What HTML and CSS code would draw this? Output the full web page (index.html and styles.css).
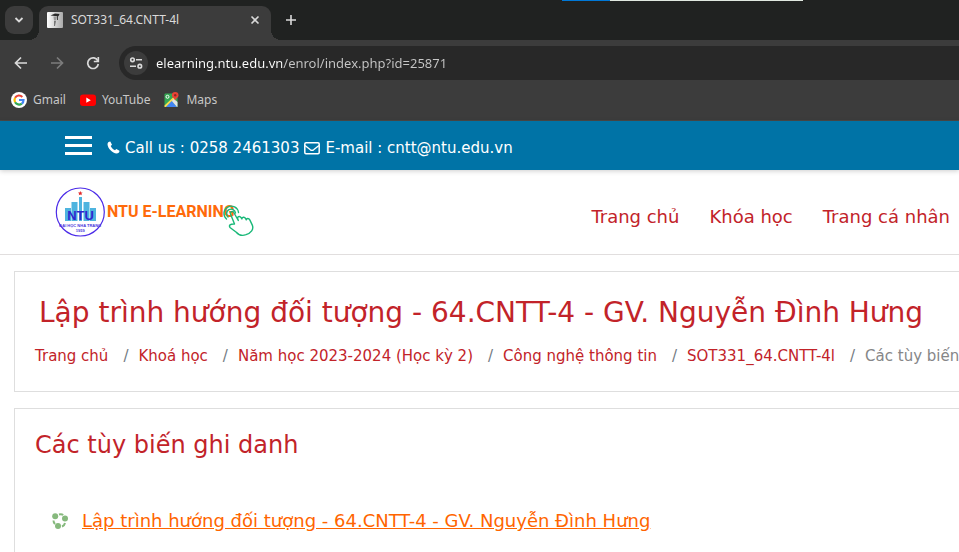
FILE: index.html
```html
<!DOCTYPE html>
<html lang="vi">
<head>
<meta charset="utf-8">
<meta name="viewport" content="width=device-width, initial-scale=1">
<title>SOT331_64.CNTT-4l</title>
<link rel="stylesheet" href="styles.css">
</head>
<body>
<div class="browser">
  <div class="accent"></div>
  <div class="tab-strip">
    <button class="tab-search" aria-label="Search tabs">
      <svg width="10" height="8" viewBox="0 0 10 8"><path d="M1.5 2 5 5.5 8.500 2" fill="none" stroke="currentColor" stroke-width="1.8"/></svg>
    </button>
    <div class="tab">
      <svg class="favicon" width="16" height="16" viewBox="0 0 16 16"><defs><linearGradient id="fav" x1="0" y1="0" x2="1" y2="0"><stop offset="0" stop-color="#fff"/><stop offset="1" stop-color="#aaa"/></linearGradient></defs><rect width="16" height="16" fill="url(#fav)"/><path d="M3.500 3.500 8 1.500 12.500 2 11.500 4.200 8 4Z" fill="#292929"/><path d="M6.500 4.500h3.500l-1 4H7Z" fill="#999"/><path d="M7 9h2l-1 5H7Z" fill="#777"/><path d="M10.500 4v4" stroke="#444"/></svg>
      <span class="tab-title">SOT331_64.CNTT-4l</span>
      <button class="tab-button" aria-label="Close tab"><svg width="10" height="10" viewBox="0 0 10 10"><path d="m1.500 1.500 7 7m0-7-7 7" stroke="currentColor" stroke-width="1.600"/></svg></button>
    </div>
    <button class="tab-button" aria-label="New tab"><svg width="12" height="12" viewBox="0 0 12 12"><path d="M6 1v10M1 6h10" stroke="currentColor" stroke-width="1.600"/></svg></button>
  </div>
  <div class="toolbar">
    <div class="nav-buttons">
      <button aria-label="Back"><svg width="14" height="14" viewBox="0 0 14 14"><path d="M13 7H2M7 1.500 1.500 7 7 12.500" fill="none" stroke="currentColor" stroke-width="1.700"/></svg></button>
      <button class="dim" aria-label="Forward"><svg width="14" height="14" viewBox="0 0 14 14"><path d="M1 7h11M7 1.500 12.500 7 7 12.500" fill="none" stroke="currentColor" stroke-width="1.700"/></svg></button>
      <button aria-label="Reload"><svg width="14" height="14" viewBox="0 0 14 14"><path d="M11.800 4.800A5.300 5.300 0 1 0 12.300 8" fill="none" stroke="currentColor" stroke-width="1.700"/><path d="M12.300 1v4.500H7.800" fill="none" stroke="currentColor" stroke-width="1.700"/></svg></button>
    </div>
    <div class="omnibox">
      <button class="site-info" aria-label="Site information"><svg width="14" height="12" viewBox="0 0 14 12"><g fill="none" stroke="currentColor" stroke-width="1.600"><circle cx="3.500" cy="2.800" r="1.800"/><path d="M7 2.800h6M1 9.200h6"/><circle cx="10.800" cy="9.200" r="1.800"/></g></svg></button>
      <input class="address" type="text" aria-label="Address" value="elearning.ntu.edu.vn/enrol/index.php?id=25871">
    </div>
  </div>
  <nav class="bookmarks" aria-label="Bookmarks">
    <a href="#"><svg width="16" height="16" viewBox="0 0 16 16"><circle cx="8" cy="8" r="8" fill="#fff"/><g fill="none" stroke-width="2.200"><path d="M4.100 5.800A4.500 4.500 0 0 1 11.300 4.900" stroke="#ea4335"/><path d="M4.100 10.200a4.500 4.500 0 0 1 0-4.400" stroke="#fbbc05"/><path d="M4.100 10.200a4.500 4.500 0 0 0 6.700 1.400" stroke="#34a853"/><path d="M10.800 11.600A4.400 4.400 0 0 0 12.500 8H8" stroke="#4285f4"/></g></svg>Gmail</a>
    <a href="#"><svg width="16" height="16" viewBox="0 0 16 16"><rect y="2.500" width="16" height="11.500" rx="3" fill="red"/><path d="M6.300 5.600v5.200L10.800 8.200Z" fill="#fff"/></svg>YouTube</a>
    <a href="#"><svg width="16" height="16" viewBox="0 0 16 16"><rect x=".5" y="1.500" width="13" height="13.500" rx="1" fill="#34a853"/><path d="M.5 13.500 9.500 5l1.500 1.500L2.200 15H.5Z" fill="#fbdc50"/><path d="M2 15 7.800 9 13 15Z" fill="#4285f4"/><path d="m7.800 9 2.200-2.200 3.500 3.200v5H13Z" fill="#e4e4e4"/><circle cx="3.500" cy="4.800" r="1.500" fill="none" stroke="#fff"/><path d="M11.200 0a3.300 3.300 0 0 0-3.300 3.300C7.900 6 10.800 6 11.200 9c.4-3 3.300-3 3.300-5.700A3.300 3.300 0 0 0 11.200 0Z" fill="#ea4335"/><circle cx="11.200" cy="3.300" r="1.200" fill="#8c2a24"/></svg>Maps</a>
  </nav>
</div>

<div class="contact-bar">
  <button class="menu" aria-label="Menu"><span></span><span></span><span></span></button>
  <p class="contact">
    <svg width="13" height="13" viewBox="0 0 13 13"><path d="M3.300.5 5 3.700 3.700 5c.8 1.900 2.300 3.400 4.300 4.300L9.300 8l3.200 1.700c0 1.700-1.200 2.800-2.900 2.800C5.500 12.300.7 7.500.5 3.300.5 1.700 1.600.5 3.300.5Z" fill="currentColor"/></svg>
    <span>Call us : 0258 2461303</span>
    <svg width="16" height="14" viewBox="0 0 16 14"><rect x=".8" y="1.800" width="14.400" height="10.900" rx="1.200" fill="none" stroke="currentColor" stroke-width="1.500"/><path d="m1 4.500 5.400 4.300q1.600 1.100 3.200 0L15 4.500" fill="none" stroke="currentColor" stroke-width="1.400"/></svg>
    <span>E-mail : cntt@ntu.edu.vn</span>
  </p>
</div>

<header class="site-header">
  <a href="#" aria-label="NTU E-Learning">
    <svg class="logo" width="200" height="50" viewBox="0 0 200 50">
      <circle cx="25.300" cy="25" r="24" fill="#fff" stroke="#4b2be8" stroke-width="1.200"/>
      <path d="m25.300 4 .7 1.500 1.600.1-1.200 1.100.4 1.600-1.500-.9-1.500.9.400-1.600L23 5.600l1.600-.1Z" fill="#e32929"/>
      <path d="M10 21h6v13h-6ZM16.500 15h6v19h-6ZM24 10h3v24h-3ZM28.500 15h6v19h-6ZM35 21h6v13h-6Z" fill="#4eb4df"/>
      <text class="logo-mark" x="25.500" y="33" text-anchor="middle">NTU</text>
      <text class="logo-caption" x="25.300" y="40" text-anchor="middle">ĐẠI HỌC NHA TRANG</text>
      <text class="logo-caption" x="25.300" y="45" text-anchor="middle">1959</text>
      <text class="logo-name" x="52" y="30">NTU E-LEARNING</text>
      <g fill="none" stroke="#19b878" stroke-width="1.400" stroke-linecap="round" stroke-linejoin="round">
        <path d="M179.500 37 175.500 27c-.8-2.300 2.100-3.700 3.300-1.500l4.500 8-.8-2.500c.4-2 2.700-2 3.600-.3l.8 1.300c0-2 2.600-2.400 3.600-.6l.8 1.400c.2-1.700 2.600-1.700 3.500.1l2.400 5c2 4.500-1.300 8-6.200 9.800-4.400 1.500-7.500.2-9.700-2.500l-6-4.500c-2.200-2.300.2-4 4.200-3.700Z"/>
        <path d="M173 30a4.500 4.500 0 1 1 7.500-4M171.500 32a7.300 7.300 0 1 1 12-6.500"/>
      </g>
    </svg>
  </a>
  <nav class="main-nav" aria-label="Main">
    <a href="#">Trang chủ</a>
    <a href="#">Khóa học</a>
    <a href="#">Trang cá nhân</a>
  </nav>
</header>

<main>
  <section class="card page-heading">
    <h1>Lập trình hướng đối tượng - 64.CNTT-4 - GV. Nguyễn Đình Hưng</h1>
    <nav aria-label="Breadcrumb">
      <ol class="breadcrumb">
        <li><a href="#">Trang chủ</a></li>
        <li><a href="#">Khoá học</a></li>
        <li><a href="#">Năm học 2023-2024 (Học kỳ 2)</a></li>
        <li><a href="#">Công nghệ thông tin</a></li>
        <li><a href="#">SOT331_64.CNTT-4l</a></li>
        <li>Các tùy biến</li>
      </ol>
    </nav>
  </section>
  <section class="card enrol">
    <h2>Các tùy biến ghi danh</h2>
    <div class="course">
      <svg width="16" height="16" viewBox="0 0 16 16"><g fill="#86b97d"><circle cx="3.200" cy="3.200" r="3"/><circle cx="13" cy="5.500" r="3"/><circle cx="6" cy="13" r="3"/></g><g fill="none" stroke="#86b97d" stroke-width="2"><path d="M7 1.500Q9.500.7 11.200 2M1.500 7.500q0 2 1.500 3.500M10 13.500q2.500-1 3-3.500"/></g></svg>
      <a href="#">Lập trình hướng đối tượng - 64.CNTT-4 - GV. Nguyễn Đình Hưng</a>
    </div>
  </section>
</main>
</body>
</html>
```
FILE: styles.css
```css
* { box-sizing: border-box; }

body {
  margin: 0;
  overflow: hidden;
  background: #fff;
  color: #c22329;
  font-family: Verdana, "DejaVu Sans", sans-serif;
}

a { color: inherit; text-decoration: none; }
button { border: 0; padding: 0; background: none; color: inherit; }
svg { display: block; flex: none; }
h1, h2, p { margin: 0; font-weight: 400; }

.browser {
  position: relative;
  background: #3c3c3c;
  border-bottom: 1px solid #4a4a48;
  color: #dadada;
  font: 12px/16px "Noto Sans", sans-serif;
}

.accent {
  position: absolute;
  top: 0;
  left: 562px;
  width: 241px;
  height: 1px;
  background: linear-gradient(to right, #0078d7 48px, #e0e8e0 48px);
}

.tab-strip {
  display: flex;
  height: 40px;
  padding: 6px 5px 0;
  background: #202221;
}

.tab-search {
  display: grid;
  place-items: center;
  width: 28px;
  height: 28px;
  margin-right: 6px;
  border-radius: 9px;
  background: #3c3c3c;
}

.tab {
  position: relative;
  display: flex;
  align-items: center;
  gap: 8px;
  width: 232px;
  padding: 0 8px 6px;
  margin-right: 12px;
  border-radius: 9px 9px 0 0;
  background: #3c3c3c;
}

/* Flared feet where the tab meets the toolbar */
.tab::before,
.tab::after {
  content: "";
  position: absolute;
  bottom: 0;
  width: 10px;
  height: 10px;
}

.tab::before { right: 100%; background: radial-gradient(circle at 0 0, transparent 10px, #3c3c3c 10px); }
.tab::after { left: 100%; background: radial-gradient(circle at 100% 0, transparent 10px, #3c3c3c 10px); }

.favicon { border-radius: 1px; }
.tab-title { flex: 1; }
.tab-button { display: grid; place-items: center; width: 16px; height: 28px; }

.toolbar {
  display: flex;
  align-items: center;
  height: 40px;
  padding-top: 6px;
}

.nav-buttons { display: flex; gap: 22px; width: 119px; padding-left: 14px; }
.nav-buttons .dim { color: #7c7c7c; }

.omnibox {
  display: flex;
  flex: 1;
  align-items: center;
  gap: 8px;
  height: 34px;
  padding-left: 5px;
  border-radius: 17px 0 0 17px;
  background: #282828;
}

.site-info {
  display: grid;
  place-items: center;
  width: 24px;
  height: 24px;
  border-radius: 50%;
  background: #3c3c3c;
}

.address {
  flex: 1;
  padding: 0;
  border: 0;
  background: linear-gradient(to right, #fff 126px, #c7c7c7 126px);
  background-clip: text;
  color: transparent;
  font: 13px/20px "Noto Sans", sans-serif;
}

.bookmarks {
  display: flex;
  align-items: center;
  gap: 14px;
  height: 40px;
  padding-left: 11px;
  color: #c7c7c7;
}

.bookmarks a { display: flex; align-items: center; gap: 6px; }

.contact-bar {
  position: relative;
  display: flex;
  align-items: center;
  gap: 15px;
  height: 49px;
  padding-left: 65px;
  background: #0073a6;
  box-shadow: 0 1px 5px #0003;
  color: #fff;
}

.menu { display: grid; gap: 5px; width: 27px; }
.menu span { height: 3px; background: #fff; }
.contact { display: flex; align-items: center; gap: 5px; padding-top: 4px; font-size: 15px; line-height: 20px; }

.site-header {
  display: flex;
  align-items: center;
  justify-content: space-between;
  height: 85px;
  padding: 0 9px 0 55px;
  border-bottom: 1px solid #e1dede;
}

.logo-mark { fill: #3026cf; font: bold 13px "Liberation Sans", sans-serif; }
.logo-caption { fill: #4936dc; font: bold 4px "Liberation Sans", sans-serif; }
.logo-name { fill: #ff6a0a; font: bold 16px Roboto, "Liberation Sans", sans-serif; }

.main-nav { display: flex; gap: 30px; padding-top: 10px; font-size: 18px; line-height: 24px; }

.card {
  margin: 16px 0 0 14px;
  border: 1px solid #dedede;
  border-right: 0;
  padding: 0 20px;
  white-space: nowrap;
}

.page-heading { height: 121px; padding-top: 24px; }
.page-heading h1 { padding-left: 4px; font-size: 28px; line-height: 34px; }

.breadcrumb {
  display: flex;
  margin: 16px 0 0;
  padding: 0;
  list-style: none;
  color: #868688;
  font-size: 15px;
  line-height: 20px;
}

.breadcrumb a { color: #c22329; }
.breadcrumb li + li::before { content: "/"; padding: 0 10px 0 15px; color: #737b82; }

.enrol { padding-top: 20px; padding-bottom: 32px; }
.enrol h2 { font-size: 24px; line-height: 32px; }

.course {
  display: flex;
  align-items: center;
  gap: 14px;
  margin-top: 48px;
  padding-left: 17px;
  color: #ff6500;
  font-size: 18px;
  line-height: 24px;
}

.course a { text-decoration: underline; }
```
